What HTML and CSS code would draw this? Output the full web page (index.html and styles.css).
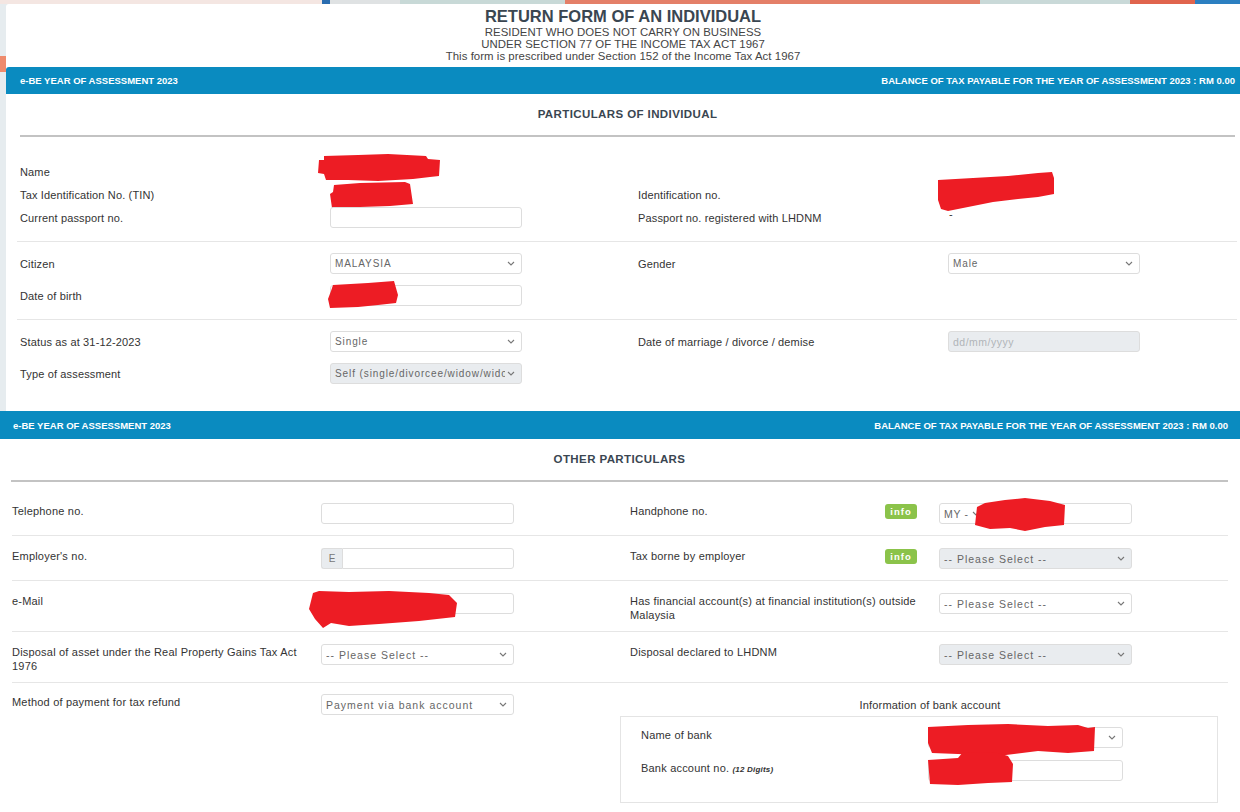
FILE: index.html
```html
<!DOCTYPE html>
<html lang="en">
<head>
	<meta charset="UTF-8">
	<title>e-BE 2023</title>
	<link rel="stylesheet" href="styles.css">
</head>
<body>
<div class="shot-a">
	<div class="strip">
		<span class="s1"></span><span class="s2"></span><span class="s3"></span><span class="s4"></span>
		<span class="s5"></span><span class="s6"></span><span class="s7"></span><span class="s8"></span>
	</div>
	<div class="card">
		<div class="form-title">
			<h1>RETURN FORM OF AN INDIVIDUAL</h1>
			<p>RESIDENT WHO DOES NOT CARRY ON BUSINESS</p>
			<p>UNDER SECTION 77 OF THE INCOME TAX ACT 1967</p>
			<p>This form is prescribed under Section 152 of the Income Tax Act 1967</p>
		</div>
		<div class="bar">
			<span>e-BE YEAR OF ASSESSMENT 2023</span>
			<span>BALANCE OF TAX PAYABLE FOR THE YEAR OF ASSESSMENT 2023 : RM 0.00</span>
		</div>
		<h3 class="sec-title">PARTICULARS OF INDIVIDUAL</h3>
		<div class="rule"></div>

		<div class="grp grp-first">
			<div class="row">
				<div class="half"><div class="lbl">Name</div>
					<div class="ctl"><svg class="redact rd-name" viewBox="0 0 122 27"><polygon points="6,2 40,1 70,0 108,2 110,5 122,6 121,22 112,23 95,25 60,27 30,26 8,26 6,20 0,19 1,6 6,6"/></svg></div>
				</div>
				<div class="half"></div>
			</div>
			<div class="row">
				<div class="half"><div class="lbl">Tax Identification No. (TIN)</div>
					<div class="ctl"><svg class="redact rd-tin" viewBox="0 0 83 26"><polygon points="4,3 30,1 75,0 80,2 83,22 60,24 30,25 2,26 0,12 3,10"/></svg></div>
				</div>
				<div class="half"><div class="lbl">Identification no.</div>
					<div class="ctl"><svg class="redact rd-id" viewBox="0 0 116 39"><polygon points="0,8 35,6 70,4 100,1 114,0 116,6 116,22 100,25 80,27 55,30 30,35 10,39 3,37 0,28"/></svg></div>
				</div>
			</div>
			<div class="row">
				<div class="half"><div class="lbl">Current passport no.</div>
					<div class="ctl"><input class="inp" type="text"></div>
				</div>
				<div class="half"><div class="lbl">Passport no. registered with LHDNM</div>
					<div class="ctl"><span class="dash">-</span></div>
				</div>
			</div>
		</div>

		<div class="grp">
			<div class="row">
				<div class="half"><div class="lbl">Citizen</div>
					<div class="ctl"><div class="sel"><span>MALAYSIA</span><svg class="chev" viewBox="0 0 8 5"><polyline points="1,1 4,4 7,1"/></svg></div></div>
				</div>
				<div class="half"><div class="lbl">Gender</div>
					<div class="ctl"><div class="sel"><span>Male</span><svg class="chev" viewBox="0 0 8 5"><polyline points="1,1 4,4 7,1"/></svg></div></div>
				</div>
			</div>
			<div class="row">
				<div class="half"><div class="lbl">Date of birth</div>
					<div class="ctl"><input class="inp" type="text"><svg class="redact rd-dob" viewBox="0 0 71 27"><polygon points="5,4 40,2 66,0 70,14 68,22 50,24 30,26 2,27 0,18 3,10"/></svg></div>
				</div>
				<div class="half"></div>
			</div>
		</div>

		<div class="grp grp-last">
			<div class="row">
				<div class="half"><div class="lbl">Status as at 31-12-2023</div>
					<div class="ctl"><div class="sel"><span>Single</span><svg class="chev" viewBox="0 0 8 5"><polyline points="1,1 4,4 7,1"/></svg></div></div>
				</div>
				<div class="half"><div class="lbl">Date of marriage / divorce / demise</div>
					<div class="ctl"><input class="inp" type="text" placeholder="dd/mm/yyyy" disabled></div>
				</div>
			</div>
			<div class="row">
				<div class="half"><div class="lbl">Type of assessment</div>
					<div class="ctl"><div class="sel off"><span>Self (single/divorcee/widow/widower)</span><svg class="chev" viewBox="0 0 8 5"><polyline points="1,1 4,4 7,1"/></svg></div></div>
				</div>
				<div class="half"></div>
			</div>
		</div>
	</div>
</div>

<div class="shot-b">
	<div class="bar">
		<span>e-BE YEAR OF ASSESSMENT 2023</span>
		<span>BALANCE OF TAX PAYABLE FOR THE YEAR OF ASSESSMENT 2023 : RM 0.00</span>
	</div>
	<h3 class="sec-title">OTHER PARTICULARS</h3>
	<div class="rule"></div>

	<div class="grp grp-first">
		<div class="row">
			<div class="half"><div class="lbl">Telephone no.</div>
				<div class="ctl"><input class="inp" type="text"></div>
			</div>
			<div class="half"><div class="lbl"><span>Handphone no.</span><span class="badge">info</span></div>
				<div class="ctl"><div class="inp phone">MY -<svg class="chev" viewBox="0 0 8 5"><polyline points="1,1 4,4 7,1"/></svg></div><svg class="redact rd-phone" viewBox="0 0 90 34"><polygon points="10,6 30,3 50,1 75,4 90,8 89,28 70,30 50,34 35,31 15,32 0,28 2,10"/></svg></div>
			</div>
		</div>
	</div>
	<div class="grp">
		<div class="row">
			<div class="half"><div class="lbl">Employer's no.</div>
				<div class="ctl"><div class="igrp"><span class="addon">E</span><input class="inp" type="text"></div></div>
			</div>
			<div class="half"><div class="lbl"><span>Tax borne by employer</span><span class="badge">info</span></div>
				<div class="ctl"><div class="sel off"><span>-- Please Select --</span><svg class="chev" viewBox="0 0 8 5"><polyline points="1,1 4,4 7,1"/></svg></div></div>
			</div>
		</div>
	</div>
	<div class="grp">
		<div class="row">
			<div class="half"><div class="lbl">e-Mail</div>
				<div class="ctl"><input class="inp" type="text"><svg class="redact rd-email" viewBox="0 0 148 39"><polygon points="4,4 10,2 40,3 80,2 120,4 140,6 148,14 146,28 110,32 70,35 40,37 22,34 14,39 6,30 0,20"/></svg></div>
			</div>
			<div class="half"><div class="lbl">Has financial account(s) at financial institution(s) outside Malaysia</div>
				<div class="ctl"><div class="sel"><span>-- Please Select --</span><svg class="chev" viewBox="0 0 8 5"><polyline points="1,1 4,4 7,1"/></svg></div></div>
			</div>
		</div>
	</div>
	<div class="grp">
		<div class="row">
			<div class="half"><div class="lbl">Disposal of asset under the Real Property Gains Tax Act 1976</div>
				<div class="ctl"><div class="sel"><span>-- Please Select --</span><svg class="chev" viewBox="0 0 8 5"><polyline points="1,1 4,4 7,1"/></svg></div></div>
			</div>
			<div class="half"><div class="lbl">Disposal declared to LHDNM</div>
				<div class="ctl"><div class="sel off"><span>-- Please Select --</span><svg class="chev" viewBox="0 0 8 5"><polyline points="1,1 4,4 7,1"/></svg></div></div>
			</div>
		</div>
	</div>
	<div class="grp grp-last">
		<div class="row">
			<div class="half"><div class="lbl">Method of payment for tax refund</div>
				<div class="ctl"><div class="sel"><span>Payment via bank account</span><svg class="chev" viewBox="0 0 8 5"><polyline points="1,1 4,4 7,1"/></svg></div></div>
			</div>
			<div class="half bank">
				<div class="bank-title">Information of bank account</div>
				<div class="bank-box">
					<div class="bank-row">
						<div class="blbl">Name of bank</div>
						<div class="bctl"><div class="sel"><span></span><svg class="chev" viewBox="0 0 8 5"><polyline points="1,1 4,4 7,1"/></svg></div><svg class="redact rd-bank" viewBox="0 0 167 33"><polygon points="0,4 40,2 80,1 120,3 150,2 160,5 167,4 166,28 140,30 110,28 70,33 30,31 4,30 0,20"/></svg></div>
					</div>
					<div class="bank-row">
						<div class="blbl">Bank account no. <i class="hint">(12 Digits)</i></div>
						<div class="bctl"><input class="inp" type="text"><svg class="redact rd-acct" viewBox="0 0 85 33"><polygon points="0,8 30,6 35,0 70,1 80,4 85,12 84,30 60,31 30,33 2,32"/></svg></div>
					</div>
				</div>
			</div>
		</div>
	</div>
</div>
</body>
</html>
```

FILE: styles.css
```css
*{
	box-sizing: border-box;
}
body{
	margin: 0;
	font-family: "Liberation Sans", Arial, sans-serif;
	font-size: 11px;
	color: #333;
	background: #fff;
}

/* top part */
.shot-a{
	height: 411px;
	overflow: hidden;
	background: linear-gradient(to bottom, #e6ecef 0, #e6ecef 56px, #ee8b6d 56px, #ee8b6d 72px, #e6ecef 72px);
}
.strip{
	display: flex;
	height: 4px;
}
.strip span{
	display: block;
	height: 4px;
}
.s1{width: 322px; background: #f4e6e2;}
.s2{width: 8px; background: #2a6db0;}
.s3{width: 70px; background: #dfe2e3;}
.s4{width: 165px; background: #c8d9d7;}
.s5{width: 415px; background: #e47f68;}
.s6{width: 150px; background: #c9d9d8;}
.s7{width: 65px; background: #e0644d;}
.s8{flex: 1; background: #2b7fc1;}

.card{
	margin-left: 6px;
	height: 407px;
	background: #fff;
	border-top-left-radius: 3px;
	overflow: hidden;
}
.form-title{
	text-align: center;
	padding: 3px 0 5px;
}
.form-title h1{
	margin: 0;
	font-size: 16.5px;
	line-height: 19px;
	color: #3a4651;
}
.form-title p{
	margin: 0;
	font-size: 11.4px;
	line-height: 12px;
	letter-spacing: .05px;
	color: #444;
}

.bar{
	display: flex;
	justify-content: space-between;
	align-items: center;
	height: 27px;
	padding: 0 5px 0 14px;
	background: #0a8bc0;
	color: #fff;
	font-weight: bold;
	font-size: 9.5px;
	border-top-left-radius: 3px;
}
.sec-title{
	margin: 0 5px 15px 14px;
	padding-top: 14px;
	text-align: center;
	font-size: 11.5px;
	line-height: 12px;
	letter-spacing: .4px;
	color: #3a4651;
}
.rule{
	height: 2px;
	margin: 0 5px 0 14px;
	background: #c3c3c3;
}

.grp{
	margin: 0 3px 0 11px;
	padding: 11px 0 13px 3px;
	border-bottom: 1px solid #e6e6e6;
	display: flex;
	flex-direction: column;
	gap: 11px;
}
.grp-first{
	padding-top: 23px;
	padding-bottom: 12px;
	gap: 0;
}
.grp-first .row{
	height: 23px;
}
.grp-last{
	border-bottom: 0;
}
.row{
	display: flex;
}
.half{
	display: flex;
	align-items: center;
	flex: none;
	width: 618px;
}
.lbl{
	flex: none;
	width: 310px;
	letter-spacing: .15px;
}
.ctl{
	position: relative;
	flex: none;
	width: 192px;
	min-height: 21px;
}
.dash{
	display: block;
	line-height: 10px;
	padding-left: 1px;
	margin-top: 2px;
}

/* controls */
.inp{
	display: block;
	width: 100%;
	height: 21px;
	padding: 0 4px;
	border: 1px solid #ddd;
	border-radius: 3px;
	background: #fff;
	font-family: inherit;
	font-size: 10.5px;
	letter-spacing: 1px;
	color: #666;
}
.inp::placeholder{
	color: #b0b4b8;
	letter-spacing: .5px;
}
.inp:disabled{
	background: #e9ecef;
}
.sel{
	display: flex;
	align-items: center;
	justify-content: space-between;
	height: 21px;
	padding: 0 6px 0 4px;
	border: 1px solid #ddd;
	border-radius: 3px;
	background: #fff;
	font-size: 10.5px;
	letter-spacing: 1px;
	color: #666;
	white-space: nowrap;
}
.shot-a .sel{
	font-size: 10px;
	letter-spacing: .9px;
}
.sel span{
	overflow: hidden;
	flex: 1;
}
.sel.off{
	background: #e9ecef;
}
.chev{
	width: 8px;
	height: 5px;
	flex: none;
	margin-left: 2px;
	fill: none;
	stroke: #777;
	stroke-width: 1.1;
}
.igrp{
	display: flex;
}
.addon{
	display: flex;
	align-items: center;
	justify-content: center;
	width: 21px;
	height: 21px;
	flex: none;
	border: 1px solid #ddd;
	border-right: 0;
	border-radius: 3px 0 0 3px;
	background: #e9ecef;
	font-size: 10px;
	color: #777;
}
.igrp .inp{
	border-radius: 0 3px 3px 0;
}
.phone{
	display: flex;
	align-items: center;
	gap: 1px;
	letter-spacing: .7px;
}
.redact{
	position: absolute;
	fill: #ed1c24;
}
.rd-name{left: -12px; top: -7px; width: 122px; height: 27px;}
.rd-tin{left: 0; top: -2px; width: 83px; height: 26px;}
.rd-id{left: -10px; top: -12px; width: 116px; height: 39px;}
.rd-dob{left: -2px; top: -4px; width: 71px; height: 27px;}
.rd-email{left: -12px; top: -4px; width: 148px; height: 39px;}
.rd-phone{left: 36px; top: -6px; width: 90px; height: 34px;}
.rd-bank{left: 0; top: -4px; width: 167px; height: 33px;}
.rd-acct{left: 0; top: -8px; width: 85px; height: 33px;}

/* bottom part */
.shot-b .bar{
	height: 28px;
	padding: 0 12px 0 13px;
	border-radius: 0;
}
.shot-b .sec-title{
	margin: 0 12px 15px 11px;
}
.shot-b .rule{
	margin: 0 12px 0 11px;
}
.shot-b .grp{
	margin: 0 12px 0 12px;
	padding: 12px 0 11px 0;
}
.shot-b .grp-first{
	padding-top: 21px;
}
.shot-b .grp-first .row{
	height: auto;
}
.shot-b .grp-last{
	padding-top: 11px;
}
.shot-b .half{
	align-items: flex-start;
}
.shot-b .lbl{
	display: flex;
	align-items: flex-start;
	width: 309px;
	padding: 1px 22px 0 0;
	margin-bottom: -2px;
	line-height: 14px;
	letter-spacing: .2px;
}
.shot-b .ctl{
	width: 193px;
}
.badge{
	margin-left: auto;
	flex: none;
	width: 32px;
	height: 15px;
	line-height: 15px;
	border-radius: 3px;
	background: #8bc34a;
	color: #fff;
	font-size: 9.5px;
	font-weight: bold;
	letter-spacing: 1px;
	text-align: center;
}
.shot-b .bank{
	flex-direction: column;
	align-items: stretch;
}
.bank-title{
	padding: 4px 18px 0 0;
	line-height: 14px;
	letter-spacing: .2px;
	text-align: center;
}
.bank-box{
	width: 598px;
	margin: 4px 0 0 -10px;
	padding: 10px 0 21px 20px;
	border: 1px solid #e4e4e4;
	display: flex;
	flex-direction: column;
	gap: 12px;
}
.bank-row{
	display: flex;
}
.blbl{
	flex: none;
	width: 287px;
	padding-top: 1px;
	line-height: 14px;
	letter-spacing: .2px;
}
.bctl{
	position: relative;
	flex: none;
	width: 195px;
}
.hint{
	font-size: 8px;
	font-weight: bold;
}
```
